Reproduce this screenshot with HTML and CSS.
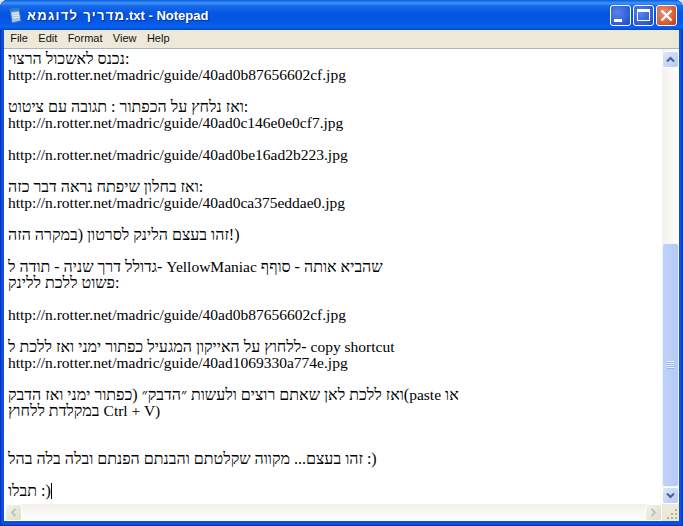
FILE: index.html
```html
<!DOCTYPE html>
<html lang="he">
<head>
<meta charset="utf-8">
<title>מדריך לדוגמא.txt - Notepad</title>
<link rel="stylesheet" href="styles.css">
</head>
<body>
<div class="window">
  <header class="titlebar">
    <svg class="app-icon" width="16" height="17" viewBox="0 0 16 17">
      <path d="M3 2 L12 1 L14 14 L5 16 Z" fill="#9fc6e8" stroke="#3f6f9f" stroke-width="1"/>
      <path d="M3 2 L12 1 L12.5 4 L3.5 5 Z" fill="#2f7fc8"/>
      <path d="M5 7 L12 6 M5.3 9 L12.3 8 M5.6 11 L12.6 10" stroke="#e8f2fb" stroke-width="1"/>
    </svg>
    <span class="title"><span class="title-heb">מדריך לדוגמא</span>.txt - Notepad</span>
    <div class="controls">
      <div class="ctl ctl-blue"><span class="min-glyph"></span></div>
      <div class="ctl ctl-blue"><span class="max-glyph"></span></div>
      <div class="ctl ctl-red">
        <svg width="13" height="13" viewBox="0 0 13 13"><path d="M1.5 1.5 L11.5 11.5 M11.5 1.5 L1.5 11.5" stroke="#fff" stroke-width="2.4"/></svg>
      </div>
    </div>
  </header>
  <nav class="menubar">
    <span class="menu-item">File</span>
    <span class="menu-item">Edit</span>
    <span class="menu-item">Format</span>
    <span class="menu-item">View</span>
    <span class="menu-item">Help</span>
  </nav>
  <main class="client">
    <div class="editor">
      <div class="line">נכנס לאשכול הרצוי:</div>
      <div class="line lat">http://n.rotter.net/madric/guide/40ad0b87656602cf.jpg</div>
      <div class="line"></div>
      <div class="line">ואז נלחץ על הכפתור : תגובה עם ציטוט:</div>
      <div class="line lat">http://n.rotter.net/madric/guide/40ad0c146e0e0cf7.jpg</div>
      <div class="line"></div>
      <div class="line lat">http://n.rotter.net/madric/guide/40ad0be16ad2b223.jpg</div>
      <div class="line"></div>
      <div class="line">ואז בחלון שיפתח נראה דבר כזה:</div>
      <div class="line lat">http://n.rotter.net/madric/guide/40ad0ca375eddae0.jpg</div>
      <div class="line"></div>
      <div class="line"><bdi>זהו בעצם הלינק לסרטון (במקרה הזה</bdi>!)</div>
      <div class="line"></div>
      <div class="line">גדולל דרך שניה - תודה ל- <span class="lat">YellowManiac</span> שהביא אותה - סוףף</div>
      <div class="line">פשוט ללכת ללינק:</div>
      <div class="line"></div>
      <div class="line lat">http://n.rotter.net/madric/guide/40ad0b87656602cf.jpg</div>
      <div class="line"></div>
      <div class="line">ללחוץ על האייקון המגעיל כפתור ימני ואז ללכת ל- <span class="lat">copy shortcut</span></div>
      <div class="line lat">http://n.rotter.net/madric/guide/40ad1069330a774e.jpg</div>
      <div class="line"></div>
      <div class="line">ואז ללכת לאן שאתם רוצים ולעשות ״הדבק״ (כפתור ימני ואז הדבק(<span class="lat">paste</span> או</div>
      <div class="line">במקלדת ללחוץ <span class="lat">Ctrl + V)</span></div>
      <div class="line"></div>
      <div class="line"></div>
      <div class="line">זהו בעצם... מקווה שקלטתם והבנתם הפנתם ובלה בלה בהל :)</div>
      <div class="line"></div>
      <div class="line">תבלו :)<span class="caret"></span></div>
    </div>
    <div class="vscroll">
      <div class="sb-btn">
        <svg width="9" height="7" viewBox="0 0 9 7"><path d="M1 5.5 L4.5 2 L8 5.5" fill="none" stroke="#4d6185" stroke-width="2"/></svg>
      </div>
      <div class="vtrack-top"></div>
      <div class="vthumb"><span class="grip"></span></div>
      <div class="sb-btn">
        <svg width="9" height="7" viewBox="0 0 9 7"><path d="M1 1.5 L4.5 5 L8 1.5" fill="none" stroke="#4d6185" stroke-width="2"/></svg>
      </div>
    </div>
    <div class="hscroll">
      <div class="sb-btn sb-off">
        <svg width="7" height="9" viewBox="0 0 7 9"><path d="M5.5 1 L2 4.5 L5.5 8" fill="none" stroke="#c3c3b8" stroke-width="2"/></svg>
      </div>
      <div class="htrack"></div>
      <div class="sb-btn sb-off">
        <svg width="7" height="9" viewBox="0 0 7 9"><path d="M1.5 1 L5 4.5 L1.5 8" fill="none" stroke="#c3c3b8" stroke-width="2"/></svg>
      </div>
    </div>
    <div class="sizer">
      <svg width="12" height="12" viewBox="0 0 12 12" fill="#b5b09a"><rect x="9" y="1" width="2" height="2"/><rect x="5" y="5" width="2" height="2"/><rect x="9" y="5" width="2" height="2"/><rect x="1" y="9" width="2" height="2"/><rect x="5" y="9" width="2" height="2"/><rect x="9" y="9" width="2" height="2"/></svg>
    </div>
  </main>
</div>
</body>
</html>
```
FILE: styles.css
```css
* { box-sizing: border-box; }
html, body { margin: 0; height: 100%; background: #d8e4f4; overflow: hidden; }
.window {
  width: 683px;
  height: 526px;
  display: flex;
  flex-direction: column;
  border-radius: 8px 8px 0 0;
  overflow: hidden;
  padding: 0 4px 5px 4px;
  background: #0a4fe0;
  box-shadow: inset 1px 0 #0831b8, inset -1px 0 #0831b8, inset 0 -1px #0831b8;
}
.titlebar {
  height: 30px;
  margin: 0 -4px;
  padding: 5px 6px 5px 7px;
  display: flex;
  align-items: center;
  background: linear-gradient(to bottom, #0a5be0 0, #3d94f5 3px, #1668ea 6px, #0355e2 14px, #0458e6 22px, #0a63ee 27px, #0546cf 30px);
}
.app-icon { flex: none; margin-right: 4px; }
.title {
  font: bold 13px "Liberation Sans", "Noto Sans", sans-serif;
  color: #fff;
  text-shadow: 1px 1px 1px #0a2f8c;
  white-space: pre;
}
.title-heb { letter-spacing: 1.3px; }
.controls { margin-left: auto; display: flex; gap: 2px; }
.ctl {
  width: 21px;
  height: 21px;
  border: 1px solid #fff;
  border-radius: 3px;
  display: flex;
  align-items: center;
  justify-content: center;
  position: relative;
}
.ctl-blue { background: radial-gradient(circle at 35% 35%, #5a83ec 0, #3565dc 55%, #1f45bd 100%); }
.ctl-red { background: radial-gradient(circle at 35% 35%, #e8917a 0, #d9633f 55%, #b8391e 100%); }
.min-glyph { width: 8px; height: 3px; background: #fff; align-self: flex-end; margin: 0 6px 3px 0; }
.max-glyph { width: 13px; height: 12px; border: 1px solid #fff; border-top-width: 3px; }
.menubar {
  height: 19px;
  background: #ece9d8;
  display: flex;
  align-items: center;
  flex: none;
  padding: 0 0 3px 1px;
  border-bottom: 1px solid #aab4c2;
}
.menu-item {
  font: 11px "Liberation Sans", "Noto Sans", sans-serif;
  color: #111;
  padding: 0 5.2px;
}
.client {
  flex: 1;
  min-height: 0;
  display: grid;
  grid-template-columns: 1fr 17px;
  grid-template-rows: 1fr 17px;
  background: #fff;
  padding-left: 1px;
}
.editor {
  overflow: hidden;
  padding: 2px 0 0 3px;
  font: 16px/16px "Liberation Serif", "Times New Roman", serif;
  color: #000;
}
.line { height: 16px; white-space: pre; }
.lat { font-size: 15.5px; }
.caret {
  display: inline-block;
  width: 1px;
  height: 16px;
  background: #000;
  vertical-align: top;
}
.vscroll {
  display: flex;
  flex-direction: column;
  background: linear-gradient(to right, #f3f1ec, #fefefb);
  padding-top: 2px;
}
.sb-btn {
  width: 17px;
  height: 17px;
  flex: none;
  border: 1px solid #fff;
  border-radius: 3px;
  background: linear-gradient(135deg, #dbe6fb, #b6caf4);
  display: flex;
  align-items: center;
  justify-content: center;
}
.sb-off { background: linear-gradient(135deg, #f4f3ec, #dfdccb); }
.vtrack-top { height: 175px; flex: none; }
.vthumb {
  flex: 1;
  background: linear-gradient(to right, #c0d2f8, #b4c9f6);
  border: 1px solid #eef3fd;
  border-radius: 3px;
  display: flex;
  align-items: center;
  justify-content: center;
}
.grip {
  width: 7px;
  height: 8px;
  background: repeating-linear-gradient(to bottom, #eaf0fd 0, #eaf0fd 1px, #9db3e6 1px, #9db3e6 2px);
}
.hscroll {
  display: flex;
  background: linear-gradient(to bottom, #f3f1ec, #fefefb);
}
.htrack { flex: 1; }
.sizer {
  background: #ece9d8;
  display: flex;
  align-items: flex-end;
  justify-content: flex-end;
  padding: 1px;
}
```
